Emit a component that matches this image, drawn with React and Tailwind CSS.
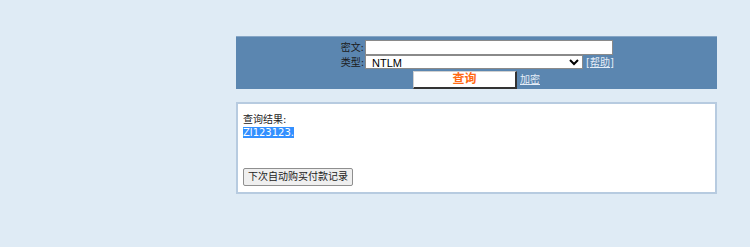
import React from 'react';

export default function App() {
  return (
    <div
      className="min-h-screen bg-[#dfebf5] pt-[36px] pl-[236px] text-[10px] text-[#111]"
      style={{ fontFamily: '"DejaVu Sans", "Noto Sans CJK SC", sans-serif' }}
    >
      {/* Query panel */}
      <div className="w-[481px] h-[53px] bg-[#5b86b0] border-t border-[#86a6c6] pt-[2px] flex flex-col items-center">
        <div className="flex items-center h-[16px]">
          <span className="w-[25px] text-right pr-[1px] text-[#1b1b1b]">密文:</span>
          <input className="w-[248px] h-[15px] bg-white border border-[#8a8a8a] outline-none" />
        </div>
        <div className="flex items-center h-[14px] ml-[1px]">
          <span className="w-[25px] text-right pr-[1px] text-[#1b1b1b]">类型:</span>
          <select
            defaultValue="NTLM"
            className="w-[218px] h-[14px] bg-white border border-[#8a8a8a] text-[11px] leading-none pl-[2px] text-black"
            style={{ fontFamily: '"Liberation Sans", Arial, sans-serif' }}
          >
            <option>NTLM</option>
          </select>
          <span className="ml-[3px] text-[#e4edf7] underline">[帮助]</span>
        </div>
        <div className="flex items-center h-[19px] mt-[1px]">
          <button className="w-[104px] h-[18px] bg-white border border-[#d0d0d0] border-r-[#333] border-b-[#333] border-r-2 border-b-2 text-[#ff6a13] font-bold text-[12px] leading-none">
            查询
          </button>
          <span className="ml-[3px] text-[#e4edf7] underline">加密</span>
        </div>
      </div>

      {/* Result box */}
      <div className="mt-[13px] w-[481px] h-[92px] bg-white border-2 border-[#b7cbe0] px-[5px] pt-[10px]">
        <div className="leading-[12px] text-[#222]">查询结果:</div>
        <div className="mt-[1px] leading-[12px]">
          <span className="bg-[#3390ff] text-white text-[10px]">Zl123123.</span>
        </div>
        <button className="mt-[29px] h-[18px] px-[4px] bg-[#efefef] border border-[#8f8f8f] rounded-[2px] text-[10px] leading-none text-[#222]">
          下次自动购买付款记录
        </button>
      </div>
    </div>
  );
}
